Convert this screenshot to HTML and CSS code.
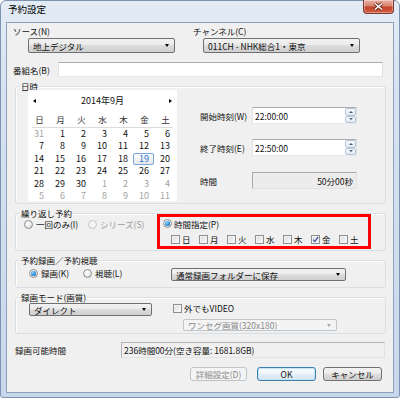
FILE: index.html
```html
<!DOCTYPE html>
<html lang="ja">
<head>
<meta charset="utf-8">
<title>予約設定</title>
<link rel="stylesheet" href="styles.css">
</head>
<body>
<div class="window">
  <div class="titlebar">
    <span class="title">予約設定</span>
    <div class="close">
      <svg width="11" height="9" viewBox="0 0 11 9"><path d="M2 1.5 L9 7.5 M9 1.5 L2 7.5" stroke="#6b2215" stroke-width="3.2" fill="none"/><path d="M2 1.5 L9 7.5 M9 1.5 L2 7.5" stroke="#ffffff" stroke-width="1.6" fill="none"/></svg>
    </div>
  </div>
  <div class="client">
    <div class="row-src">
      <div class="col-src">
        <div class="lbl">ソース(N)</div>
        <div class="combo w-src"><span>地上デジタル</span><i class="arrow"></i></div>
      </div>
      <div class="col-ch">
        <div class="lbl">チャンネル(C)</div>
        <div class="combo w-ch"><span>011CH - NHK総合1・東京</span><i class="arrow"></i></div>
      </div>
    </div>

    <div class="row-title">
      <span class="lbl w-title-lbl">番組名(B)</span>
      <div class="textbox w-title"></div>
    </div>

    <div class="group g-date">
      <div class="gtitle"><span>日時</span></div>
      <div class="date-body">
        <div class="calendar">
          <div class="cal-head"><i class="cal-prev"></i><span>2014年9月</span><i class="cal-next"></i></div>
          <div class="cal-wd"><span>日</span><span>月</span><span>火</span><span>水</span><span>木</span><span>金</span><span>土</span></div>
          <div class="cal-sep"></div>
          <div class="cal-days">
            <span class="o">31</span><span>1</span><span>2</span><span>3</span><span>4</span><span>5</span><span>6</span>
            <span>7</span><span>8</span><span>9</span><span>10</span><span>11</span><span>12</span><span>13</span>
            <span>14</span><span>15</span><span>16</span><span>17</span><span>18</span><span class="today">19</span><span>20</span>
            <span>21</span><span>22</span><span>23</span><span>24</span><span>25</span><span>26</span><span>27</span>
            <span>28</span><span>29</span><span>30</span><span class="o">1</span><span class="o">2</span><span class="o">3</span><span class="o">4</span>
            <span class="o">5</span><span class="o">6</span><span class="o">7</span><span class="o">8</span><span class="o">9</span><span class="o">10</span><span class="o">11</span>
          </div>
        </div>
        <div class="times">
          <div class="trow">
            <span class="lbl w-time-lbl">開始時刻(W)</span>
            <div class="textbox tfield"><span>22:00:00</span>
              <div class="spin"><div class="sb"><i class="up"></i></div><div class="sb"><i class="dn"></i></div></div>
            </div>
          </div>
          <div class="trow">
            <span class="lbl w-time-lbl">終了時刻(E)</span>
            <div class="textbox tfield"><span>22:50:00</span>
              <div class="spin"><div class="sb"><i class="up"></i></div><div class="sb"><i class="dn"></i></div></div>
            </div>
          </div>
          <div class="trow r3">
            <span class="lbl w-time-lbl">時間</span>
            <div class="dfield">50分00秒</div>
          </div>
        </div>
      </div>
    </div>

    <div class="group g-repeat">
      <div class="gtitle"><span>繰り返し予約</span></div>
      <div class="rep-body">
        <div class="rep-left">
          <div class="ritem w64"><i class="radio"></i><span>一回のみ(I)</span></div>
          <div class="ritem dis"><i class="radio dis"></i><span>シリーズ(S)</span></div>
        </div>
        <div class="redbox">
          <div class="rb-row1"><div class="ritem"><i class="radio on"></i><span>時間指定(P)</span></div></div>
          <div class="rb-row2">
            <div class="citem"><i class="check"></i><span>日</span></div>
            <div class="citem"><i class="check"></i><span>月</span></div>
            <div class="citem"><i class="check"></i><span>火</span></div>
            <div class="citem"><i class="check"></i><span>水</span></div>
            <div class="citem"><i class="check"></i><span>木</span></div>
            <div class="citem"><i class="check on"><svg width="7" height="7" viewBox="0 0 7 7"><path d="M1 3.6 L2.9 5.6 L6.2 0.9" stroke="#3b55a0" stroke-width="1.3" fill="none"/></svg></i><span>金</span></div>
            <div class="citem"><i class="check"></i><span>土</span></div>
          </div>
        </div>
      </div>
    </div>

    <div class="group g-rec">
      <div class="gtitle"><span>予約録画／予約視聴</span></div>
      <div class="rec-body">
        <div class="rec-left">
          <div class="ritem w54"><i class="radio on"></i><span>録画(K)</span></div>
          <div class="ritem"><i class="radio"></i><span>視聴(L)</span></div>
        </div>
        <div class="combo w-folder"><span>通常録画フォルダーに保存</span><i class="arrow"></i></div>
      </div>
    </div>

    <div class="group g-mode">
      <div class="gtitle"><span>録画モード(画質)</span></div>
      <div class="mode-body">
        <div class="combo w-direct"><span>ダイレクト</span><i class="arrow"></i></div>
        <div class="mode-right">
          <div class="citem wide"><i class="check"></i><span>外でもVIDEO</span></div>
          <div class="combo dis w-oneseg"><span>ワンセグ画質(320x180)</span><i class="arrow"></i></div>
        </div>
      </div>
    </div>

    <div class="row-avail">
      <span class="lbl w-avail-lbl">録画可能時間</span>
      <div class="afield">236時間00分(空き容量: 1681.8GB)</div>
    </div>

    <div class="row-buttons">
      <div class="btn dis w-detail">詳細設定(D)</div>
      <div class="btn def w-ok">OK</div>
      <div class="btn w-cancel">キャンセル</div>
    </div>
  </div>
</div>
</body>
</html>
```

FILE: styles.css
```css
* { box-sizing: border-box; }
html, body { margin: 0; padding: 0; }
body {
  width: 400px;
  height: 398px;
  overflow: hidden;
  background: #ffffff;
  font-family: "Noto Sans CJK JP", "Noto Sans", sans-serif;
  font-size: 8.5px;
  color: #111;
}
i { display: block; font-style: normal; }

.window {
  width: 400px;
  height: 398px;
  border: 1px solid #7d93b0;
  border-radius: 6px 6px 3px 3px;
  padding: 0 5px 4px 5px;
  background: linear-gradient(180deg, #e3ebf5 0%, #d6e2f0 25%, #c8d8ec 100%);
  display: flex;
  flex-direction: column;
}
.titlebar {
  height: 21px;
  display: flex;
  justify-content: space-between;
  align-items: flex-start;
}
.title {
  margin-left: 2px;
  line-height: 17px;
  font-size: 9.5px;
  color: #000;
}
.close {
  width: 31px;
  height: 14px;
  margin-top: -1px;
  border: 1px solid #7b3a2e;
  border-top: none;
  border-radius: 0 0 4px 4px;
  background: linear-gradient(180deg, #eab3a6 0%, #d7826f 45%, #c4442b 55%, #d35c3f 100%);
  box-shadow: inset 0 0 0 1px rgba(255,255,255,0.35);
  display: flex;
  align-items: center;
  justify-content: center;
}

.client {
  flex: 1;
  border: 1px solid #8ea1ba;
  background: #f0f0f0;
}

.lbl { line-height: 14px; white-space: nowrap; }

/* combo boxes */
.combo {
  display: flex;
  align-items: center;
  border: 1px solid #707070;
  border-radius: 2px;
  background: linear-gradient(180deg, #f2f2f2 0%, #ebebeb 50%, #dddddd 50%, #cfcfcf 100%);
  padding-left: 4px;
  white-space: nowrap;
  overflow: hidden;
}
.combo .arrow {
  margin-left: auto;
  margin-right: 5px;
  width: 0;
  height: 0;
  border-left: 2.5px solid transparent;
  border-right: 2.5px solid transparent;
  border-top: 3px solid #000;
}
.combo.dis {
  border-color: #c2c6c9;
  background: #f4f4f4;
  color: #8a8a8a;
}
.combo.dis .arrow { border-top-color: #a8a8a8; }

.textbox {
  background: #fff;
  border: 1px solid;
  border-color: #abadb3 #dbdfe6 #e3e9ef #e2e3ea;
}

/* row 1 */
.row-src { display: flex; padding-top: 1px; }
.col-src { width: 186px; padding-left: 6px; }
.w-src { margin-left: 15px; width: 147px; height: 15px; }
.w-ch { margin-left: 10px; width: 157px; height: 15px; }

/* row 2 */
.row-title {
  display: flex;
  align-items: center;
  margin-top: 9px;
  padding-left: 6px;
  height: 15px;
}
.w-title-lbl { width: 45px; }
.w-title { width: 325px; height: 15px; }

/* group boxes */
.group {
  margin: 9px 0 0 8px;
  width: 371px;
  border: 1px solid #d5dfe5;
  border-radius: 3px;
  box-shadow: inset 1px 1px 0 #ffffff;
}
.gtitle {
  display: flex;
  height: 14px;
  margin: -8px 0 -6px 4px;
}
.gtitle span {
  background: #f0f0f0;
  padding: 0 1px;
  line-height: 14px;
  color: #111;
}

/* date group */
.date-body { display: flex; padding: 3px 0 2px 12px; }
.calendar {
  position: relative;
  width: 149px;
  height: 111px;
  background: #ffffff;
  padding-top: 5px;
  overflow: hidden;
}
.cal-head {
  height: 12px;
  display: flex;
  align-items: center;
  justify-content: space-between;
  padding: 0 5px;
  line-height: 12px;
  font-size: 9px;
}
.cal-prev {
  width: 0; height: 0;
  border-top: 2.5px solid transparent;
  border-bottom: 2.5px solid transparent;
  border-right: 3px solid #000;
}
.cal-next {
  width: 0; height: 0;
  border-top: 2.5px solid transparent;
  border-bottom: 2.5px solid transparent;
  border-left: 3px solid #000;
}
.cal-wd {
  display: grid;
  grid-template-columns: repeat(7, 21px);
  margin: 6px 0 0 2px;
  height: 14px;
  line-height: 12px;
}
.cal-wd span { text-align: center; padding-right: 2px; color: #333; }
.cal-sep { height: 1px; background: #dcdcdc; margin: 0 4px; }
.cal-days {
  display: grid;
  grid-template-columns: repeat(7, 21px);
  grid-auto-rows: 12.4px;
  margin-left: 2px;
  line-height: 12px;
  font-size: 9px;
}
.cal-days span { text-align: right; padding-right: 7px; color: #111; }
.cal-days span.o { color: #a3a3a3; }
.cal-days span.today {
  margin: 0 2px 0 -2px;
  padding-right: 4px;
  border: 1px solid #79a7dc;
  border-radius: 2px;
  background: linear-gradient(180deg, #fcfcfc, #e6e9ed);
  color: #2f6fcd;
  line-height: 10.4px;
}

.times { margin-left: 23px; padding-top: 17px; }
.trow { display: flex; align-items: center; height: 17px; }
.trow + .trow { margin-top: 15px; }
.trow.r3 { margin-top: 16px; }
.w-time-lbl { width: 52px; }
.tfield {
  width: 105px;
  height: 17px;
  display: flex;
  align-items: center;
  padding-left: 2px;
}
.spin {
  margin-left: auto;
  margin-right: 0;
  width: 11px;
  height: 15px;
  display: flex;
  flex-direction: column;
}
.sb {
  flex: 1;
  border: 1px solid #b5c4d6;
  border-radius: 2px;
  background: linear-gradient(180deg, #f8fafc, #e2e8f0);
  display: flex;
  align-items: center;
  justify-content: center;
}
.sb .up {
  width: 0; height: 0;
  border-left: 2px solid transparent;
  border-right: 2px solid transparent;
  border-bottom: 2px solid #4a5c80;
}
.sb .dn {
  width: 0; height: 0;
  border-left: 2px solid transparent;
  border-right: 2px solid transparent;
  border-top: 2px solid #4a5c80;
}
.dfield {
  width: 105px;
  height: 17px;
  display: flex;
  align-items: center;
  justify-content: flex-end;
  padding-right: 3px;
  background: #ececec;
  border: 1px solid;
  border-color: #a9a9a9 #e3e3e3 #e3e3e3 #a9a9a9;
}

/* radios & checkboxes */
.ritem { display: flex; align-items: center; gap: 3px; white-space: nowrap; line-height: 14px; }
.ritem.dis { color: #9a9a9a; }
.ritem.w64 { width: 64px; }
.ritem.w54 { width: 54px; }
.radio {
  width: 9px;
  height: 9px;
  border-radius: 50%;
  border: 1px solid #8e8f8f;
  background: radial-gradient(circle at 40% 35%, #ffffff 0%, #e9e9e9 55%, #d2d2d2 100%);
  display: flex;
  align-items: center;
  justify-content: center;
}
.radio.on::after {
  content: "";
  width: 5px;
  height: 5px;
  border-radius: 50%;
  background: radial-gradient(circle at 40% 35%, #8fdcff 0%, #2f8fe0 50%, #1257a8 100%);
}
.radio.dis { border-color: #c4c4c4; background: #f4f4f4; }

.citem { width: 28px; display: flex; align-items: center; gap: 2px; white-space: nowrap; line-height: 13px; }
.citem.wide { width: auto; line-height: 14px; height: 14px; }
.check {
  width: 9px;
  height: 9px;
  border: 1px solid #8e8f8f;
  background: linear-gradient(135deg, #d0d4da 0%, #eef0f2 60%, #fafafa 100%);
  box-shadow: inset 0 0 0 1px #f4f4f4;
  display: flex;
  align-items: center;
  justify-content: center;
}

/* repeat group */
.rep-body { display: flex; height: 36px; }
.rep-left { width: 141px; padding: 3px 0 0 8px; display: flex; align-items: flex-start; }
.redbox {
  width: 214px;
  height: 35px;
  border: 3px solid #ff0000;
  padding-left: 3px;
}
.rb-row1 { height: 13px; display: flex; align-items: center; }
.rb-row1 .ritem { gap: 2px; }
.rb-row2 { margin-top: 3px; height: 13px; display: flex; padding-left: 8px; }

/* rec group */
.rec-body { display: flex; height: 26px; align-items: flex-start; }
.rec-left { width: 155px; padding: 5px 0 0 13px; display: flex; }
.w-folder { margin-top: 7px; width: 175px; height: 13px; }

/* mode group */
.mode-body { display: flex; height: 35px; align-items: flex-start; }
.w-direct { margin: 5px 0 0 13px; width: 123px; height: 13px; }
.mode-right { margin-left: 21px; padding-top: 3px; }
.w-oneseg { margin: 4px 0 0 10px; width: 154px; height: 12px; }

/* available */
.row-avail {
  display: flex;
  align-items: center;
  margin-top: 8px;
  padding-left: 8px;
  height: 16px;
}
.w-avail-lbl { width: 106px; }
.afield {
  width: 264px;
  height: 16px;
  display: flex;
  align-items: center;
  padding-left: 2px;
  background: #f0f0f0;
  border: 1px solid;
  border-color: #b4b4b4 #e3e3e3 #e3e3e3 #b4b4b4;
  white-space: nowrap;
}

/* buttons */
.row-buttons {
  display: flex;
  justify-content: flex-end;
  margin-top: 9px;
  padding-right: 11px;
  height: 14px;
}
.btn {
  height: 14px;
  display: flex;
  align-items: center;
  justify-content: center;
  border: 1px solid #707070;
  border-radius: 3px;
  background: linear-gradient(180deg, #f2f2f2 0%, #ebebeb 50%, #dddddd 50%, #cfcfcf 100%);
  white-space: nowrap;
}
.btn.def {
  border-color: #3c7fb1;
  box-shadow: inset 0 0 0 1px #c4e4f8;
  background: linear-gradient(180deg, #f7fbfe 0%, #eef5fb 50%, #e1edf7 50%, #d8e7f4 100%);
}
.btn.dis {
  border-color: #c0c4c7;
  background: #f4f4f4;
  color: #8c8c8c;
}
.w-detail { width: 57px; margin-right: 10px; }
.w-ok { width: 59px; margin-right: 7px; }
.w-cancel { width: 59px; }
```
